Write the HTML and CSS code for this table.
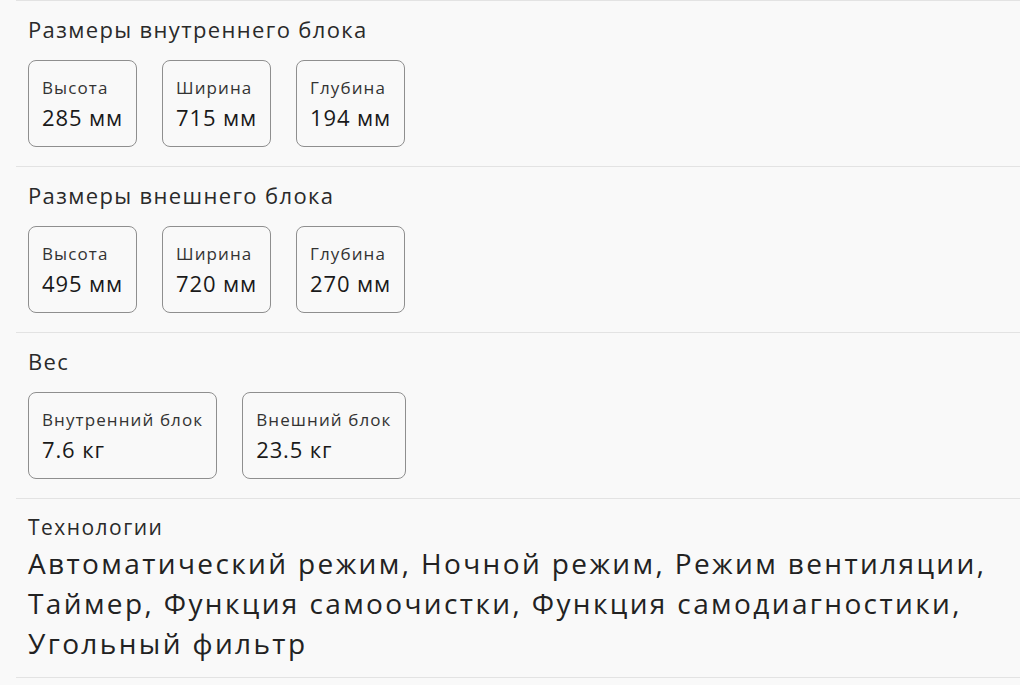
FILE: index.html
```html
<!DOCTYPE html>
<html lang="ru">
<head>
<meta charset="utf-8">
<title>Характеристики</title>
<link rel="stylesheet" href="styles.css">
</head>
<body>
<div class="specs">
  <section class="group">
    <h3 class="group-title">Размеры внутреннего блока</h3>
    <div class="cards">
      <div class="card"><div class="card-label">Высота</div><div class="card-value">285 мм</div></div>
      <div class="card"><div class="card-label">Ширина</div><div class="card-value">715 мм</div></div>
      <div class="card"><div class="card-label">Глубина</div><div class="card-value">194 мм</div></div>
    </div>
  </section>
  <section class="group">
    <h3 class="group-title">Размеры внешнего блока</h3>
    <div class="cards">
      <div class="card"><div class="card-label">Высота</div><div class="card-value">495 мм</div></div>
      <div class="card"><div class="card-label">Ширина</div><div class="card-value">720 мм</div></div>
      <div class="card"><div class="card-label">Глубина</div><div class="card-value">270 мм</div></div>
    </div>
  </section>
  <section class="group">
    <h3 class="group-title">Вес</h3>
    <div class="cards">
      <div class="card"><div class="card-label">Внутренний блок</div><div class="card-value">7.6 кг</div></div>
      <div class="card"><div class="card-label">Внешний блок</div><div class="card-value">23.5 кг</div></div>
    </div>
  </section>
  <section class="group group-text">
    <h3 class="text-title">Технологии</h3>
    <p class="text-body">Автоматический режим, Ночной режим, Режим вентиляции, Таймер, Функция самоочистки, Функция самодиагностики, Угольный фильтр</p>
  </section>
</div>
</body>
</html>
```

FILE: styles.css
```css
html, body {
  margin: 0;
  padding: 0;
  background: #f9f9f9;
}

body {
  font-family: "Open Sans", "Noto Sans", sans-serif;
  color: #222;
}

.specs {
  margin-left: 16px;
  border-bottom: 1px solid #e3e3e3;
}

.group {
  border-top: 1px solid #e3e3e3;
  padding: 14px 12px 19px;
}

.group-title {
  margin: 0 0 17px;
  font-size: 22px;
  line-height: 28px;
  font-weight: 400;
  letter-spacing: 0.062em;
  color: #2a2a2a;
}

.cards {
  display: flex;
  gap: 25px;
}

.card {
  border: 1px solid #8f8f8f;
  border-radius: 8px;
  padding: 17px 13px 16px;
}

.card-label {
  font-size: 17px;
  line-height: 20px;
  letter-spacing: 0.065em;
  color: #333;
}

.card-value {
  margin-top: 6px;
  font-size: 22px;
  line-height: 26px;
  font-weight: 500;
  letter-spacing: 0.04em;
  color: #1a1a1a;
}

.group-text {
  padding-top: 16px;
  padding-bottom: 14px;
}

.text-title {
  margin: 0 0 4px;
  font-size: 21px;
  line-height: 24px;
  font-weight: 400;
  letter-spacing: 0.07em;
  color: #2a2a2a;
}

.text-body {
  margin: 0;
  font-size: 28px;
  line-height: 40px;
  letter-spacing: 0.085em;
  color: #222;
}
```
